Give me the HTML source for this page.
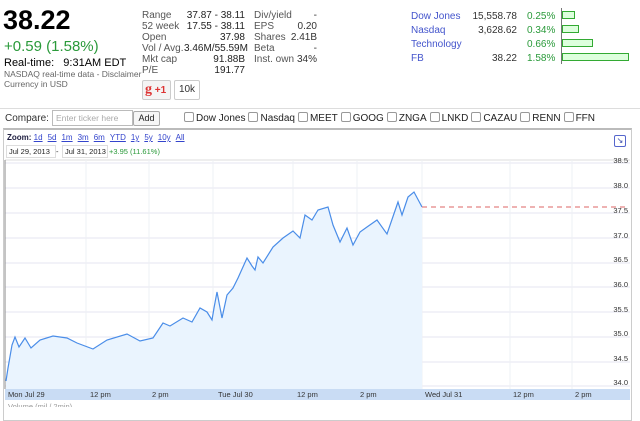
<!DOCTYPE html>
<html><head><style>
body{margin:0;width:640px;height:407px;overflow:hidden;background:#fff;font-family:"Liberation Sans",Arial,sans-serif;color:#222;position:relative}
.a{position:absolute;white-space:nowrap}
.s{font-size:10px;line-height:11px;color:#333}
.lnk{color:#4455cc}
.g{color:#2a9a3a}
.zl{color:#3344cc;text-decoration:underline;margin-right:5px}
.cb{display:inline-block;width:8px;height:8px;border:1px solid #999;border-radius:2px;vertical-align:-1px;margin:0 2px 0 3px;background:#fff}
</style></head><body>
<div class="a" style="left:3px;top:5px;font-size:27px;font-weight:bold;color:#000">38.22</div>
<div class="a g" style="left:4px;top:38px;font-size:15px">+0.59 (1.58%)</div>
<div class="a" style="left:4px;top:57px;font-size:11px;color:#000">Real-time:&nbsp;&nbsp;&nbsp;9:31AM EDT</div>
<div class="a" style="left:4px;top:69px;font-size:8.5px;color:#666">NASDAQ real-time data - Disclaimer</div>
<div class="a" style="left:4px;top:79px;font-size:8.5px;color:#666">Currency in USD</div>

<div class="a s" style="left:142px;top:10px;color:#555">Range<br>52 week<br>Open<br>Vol / Avg.<br>Mkt cap<br>P/E</div>
<div class="a s" style="left:184px;width:61px;top:10px;text-align:right;color:#222">37.87 - 38.11<br>17.55 - 38.11<br>37.98<br>3.46M/55.59M<br>91.88B<br>191.77</div>
<div class="a s" style="left:254px;top:10px;color:#555">Div/yield<br>EPS<br>Shares<br>Beta<br>Inst. own</div>
<div class="a s" style="left:280px;width:37px;top:10px;text-align:right">-<br>0.20<br>2.41B<br>-<br>34%</div>
<div class="a" style="left:142px;top:80px;width:27px;height:18px;border:1px solid #ccc;border-radius:2px;background:#f4f4f4;font-size:10px;color:#d33;font-weight:bold;line-height:18px"><span style="font-family:'Liberation Serif';font-size:14px;margin-left:2px">g</span> +1</div>
<div class="a" style="left:174px;top:80px;width:24px;height:18px;border:1px solid #ccc;border-radius:2px;font-size:10px;line-height:18px;text-align:center;color:#333">10k</div>

<div class="a s lnk" style="left:411px;top:10px;line-height:14px">Dow Jones<br>Nasdaq<br>Technology<br>FB</div>
<div class="a s" style="left:470px;width:47px;top:10px;line-height:14px;text-align:right">15,558.78<br>3,628.62<br><br>38.22</div>
<div class="a s g" style="left:527px;top:10px;line-height:14px">0.25%<br>0.34%<br>0.66%<br>1.58%</div>
<div class="a" style="left:561px;top:8px;width:1px;height:56px;background:#777"></div>
<div class="a" style="left:562px;top:11px;width:11px;height:6px;border:1px solid #3a3;background:#dfd"></div>
<div class="a" style="left:562px;top:25px;width:15px;height:6px;border:1px solid #3a3;background:#dfd"></div>
<div class="a" style="left:562px;top:39px;width:29px;height:6px;border:1px solid #3a3;background:#dfd"></div>
<div class="a" style="left:562px;top:53px;width:65px;height:6px;border:1px solid #3a3;background:#dfd"></div>

<div class="a" style="left:0;top:108px;width:640px;height:1px;background:#ddd"></div>
<div class="a" style="left:5px;top:113px;font-size:10px;color:#333">Compare:</div>
<div class="a" style="left:52px;top:110px;width:76px;height:14px;border:1px solid #bbb;font-size:8.5px;color:#aaa;padding-left:3px;line-height:14px;overflow:hidden">Enter ticker here</div>
<div class="a" style="left:133px;top:111px;width:25px;height:13px;border:1px solid #aaa;border-radius:2px;font-size:9px;line-height:13px;text-align:center;background:#f6f6f6">Add</div>
<div class="a" style="left:181px;top:112px;font-size:10px;color:#222"><span class="cb"></span>Dow Jones<span class="cb"></span>Nasdaq<span class="cb"></span>MEET<span class="cb"></span>GOOG<span class="cb"></span>ZNGA<span class="cb"></span>LNKD<span class="cb"></span>CAZAU<span class="cb"></span>RENN<span class="cb"></span>FFN</div>

<div class="a" style="left:3px;top:128px;width:627px;height:290px;border:1px solid #ccc;border-top:2px solid #bbb"></div>
<div class="a" style="left:7px;top:133px;font-size:8px;color:#333"><b style="color:#224">Zoom:</b> <span class="zl">1d</span><span class="zl">5d</span><span class="zl">1m</span><span class="zl">3m</span><span class="zl">6m</span><span class="zl">YTD</span><span class="zl">1y</span><span class="zl">5y</span><span class="zl">10y</span><span class="zl">All</span></div>
<div class="a" style="left:6px;top:145px;width:46px;height:11px;border:1px solid #ddd;font-size:7.5px;line-height:11px;padding-left:2px">Jul 29, 2013</div>
<div class="a" style="left:56px;top:147px;font-size:7.5px">-</div>
<div class="a" style="left:62px;top:145px;width:42px;height:11px;border:1px solid #ddd;font-size:7.5px;line-height:11px;padding-left:2px">Jul 31, 2013</div>
<div class="a g" style="left:109px;top:147px;font-size:7.5px">+3.95 (11.61%)</div>
<div class="a" style="left:614px;top:135px;width:10px;height:10px;border:1px solid #56c;border-radius:2px;font-size:8px;line-height:10px;text-align:center;color:#34a">↘</div>

<svg class="a" style="left:0;top:0" width="640" height="407">
<line x1="5" y1="160" x2="630" y2="160" stroke="#ddd"/>
<g stroke="#e4e4f2" stroke-width="1">
<line x1="5" y1="163" x2="630" y2="163"/><line x1="5" y1="188" x2="630" y2="188"/><line x1="5" y1="213" x2="630" y2="213"/><line x1="5" y1="238" x2="630" y2="238"/><line x1="5" y1="263" x2="630" y2="263"/><line x1="5" y1="287" x2="630" y2="287"/><line x1="5" y1="312" x2="630" y2="312"/><line x1="5" y1="337" x2="630" y2="337"/><line x1="5" y1="362" x2="630" y2="362"/><line x1="5" y1="386" x2="630" y2="386"/>
</g>
<g stroke="#eef0f4"><line x1="86" y1="160" x2="86" y2="389"/><line x1="149" y1="160" x2="149" y2="389"/><line x1="213" y1="160" x2="213" y2="389"/><line x1="293" y1="160" x2="293" y2="389"/><line x1="357" y1="160" x2="357" y2="389"/><line x1="422" y1="160" x2="422" y2="389"/><line x1="510" y1="160" x2="510" y2="389"/><line x1="572" y1="160" x2="572" y2="389"/></g>
<path d="M6,381 L8,368 12,345 15,337 19,347 25,338 31,348 40,340 53,336 67,338 77,343 93,349 107,340 127,334 140,341 153,338 163,323 170,326 183,318 192,322 200,308 207,312 212,320 214,308 217,292 222,318 227,295 233,288 238,278 247,258 252,266 255,270 258,257 263,263 273,247 283,238 293,231 300,238 305,215 312,220 318,210 328,207 333,225 340,242 347,228 353,245 360,232 367,227 377,220 387,234 398,202 402,215 408,197 414,192 422,207 L422,389 6,389Z" fill="#eaf4fe"/>
<path d="M6,381 L8,368 12,345 15,337 19,347 25,338 31,348 40,340 53,336 67,338 77,343 93,349 107,340 127,334 140,341 153,338 163,323 170,326 183,318 192,322 200,308 207,312 212,320 214,308 217,292 222,318 227,295 233,288 238,278 247,258 252,266 255,270 258,257 263,263 273,247 283,238 293,231 300,238 305,215 312,220 318,210 328,207 333,225 340,242 347,228 353,245 360,232 367,227 377,220 387,234 398,202 402,215 408,197 414,192 422,207" fill="none" stroke="#4a8de8" stroke-width="1.2"/>
<line x1="422" y1="207" x2="628" y2="207" stroke="#d66" stroke-dasharray="5,4"/>
<line x1="5" y1="160" x2="5" y2="389" stroke="#888"/>
<rect x="5" y="389" width="625" height="11" fill="#c9dcf4"/>
<g font-size="7.5" fill="#333" font-family="Liberation Sans"><text x="8" y="397">Mon Jul 29</text><text x="90" y="397">12 pm</text><text x="152" y="397">2 pm</text><text x="218" y="397">Tue Jul 30</text><text x="297" y="397">12 pm</text><text x="360" y="397">2 pm</text><text x="425" y="397">Wed Jul 31</text><text x="513" y="397">12 pm</text><text x="575" y="397">2 pm</text>
<g text-anchor="end"><text x="628" y="163">38.5</text><text x="628" y="188">38.0</text><text x="628" y="213">37.5</text><text x="628" y="238">37.0</text><text x="628" y="262">36.5</text><text x="628" y="287">36.0</text><text x="628" y="312">35.5</text><text x="628" y="336">35.0</text><text x="628" y="361">34.5</text><text x="628" y="385">34.0</text></g>
<text x="8" y="409" fill="#999">Volume (mil / 2min)</text></g>
</svg>
</body></html>
